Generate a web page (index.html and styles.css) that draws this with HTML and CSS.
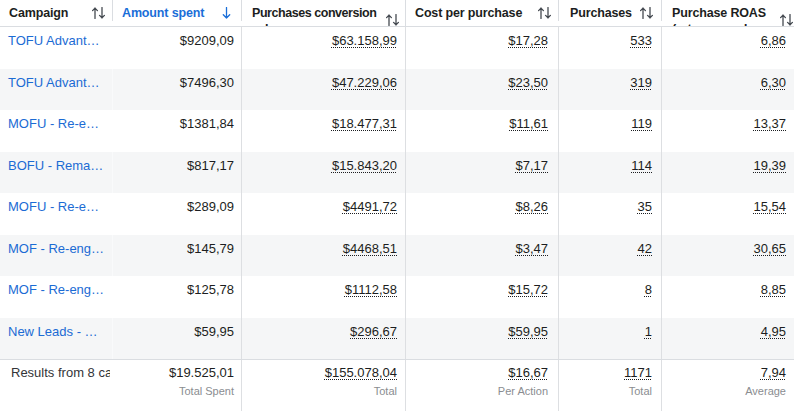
FILE: index.html
```html
<!DOCTYPE html>
<html>
<head>
<meta charset="utf-8">
<link rel="stylesheet" href="styles.css">
</head>
<body>
<div class="table">
  <div class="row head">
    <div class="hc c1"><span class="ht">Campaign</span><svg class="sort" viewBox="0 0 13 12"><path d="M3 11.5V1M0.6 3.6L3 1.1L5.4 3.6M10 0.5V11M7.6 8.4L10 10.9L12.4 8.4"/></svg></div>
    <div class="hc active"><span class="ht">Amount spent</span><svg class="sortdown" viewBox="0 0 9 12"><path d="M4.5 0.5V11M1.3 7.8L4.5 11L7.7 7.8"/></svg></div>
    <div class="hc pc two"><span class="ht">Purchases conversion<br>value</span><svg class="sort" viewBox="0 0 13 12"><path d="M3 11.5V1M0.6 3.6L3 1.1L5.4 3.6M10 0.5V11M7.6 8.4L10 10.9L12.4 8.4"/></svg></div>
    <div class="hc cp"><span class="ht">Cost per purchase</span><svg class="sort" viewBox="0 0 13 12"><path d="M3 11.5V1M0.6 3.6L3 1.1L5.4 3.6M10 0.5V11M7.6 8.4L10 10.9L12.4 8.4"/></svg></div>
    <div class="hc pu"><span class="ht">Purchases</span><svg class="sort" viewBox="0 0 13 12"><path d="M3 11.5V1M0.6 3.6L3 1.1L5.4 3.6M10 0.5V11M7.6 8.4L10 10.9L12.4 8.4"/></svg></div>
    <div class="hc ro two"><span class="ht">Purchase ROAS<br>(return on ad spend)</span><svg class="sort" viewBox="0 0 13 12"><path d="M3 11.5V1M0.6 3.6L3 1.1L5.4 3.6M10 0.5V11M7.6 8.4L10 10.9L12.4 8.4"/></svg></div>
  </div>

  <div class="row body">
    <div class="c c1 link">TOFU Advantage+ Shopping</div>
    <div class="c n amt">$9209,09</div>
    <div class="c n pcv"><span class="u">$63.158,99</span></div>
    <div class="c n cpp"><span class="u">$17,28</span></div>
    <div class="c n pur"><span class="u">533</span></div>
    <div class="c n roas"><span class="u">6,86</span></div>
  </div>
  <div class="row body alt">
    <div class="c c1 link">TOFU Advantage+ Broad</div>
    <div class="c n amt">$7496,30</div>
    <div class="c n pcv"><span class="u">$47.229,06</span></div>
    <div class="c n cpp"><span class="u">$23,50</span></div>
    <div class="c n pur"><span class="u">319</span></div>
    <div class="c n roas"><span class="u">6,30</span></div>
  </div>
  <div class="row body">
    <div class="c c1 link">MOFU - Re-engagement</div>
    <div class="c n amt">$1381,84</div>
    <div class="c n pcv"><span class="u">$18.477,31</span></div>
    <div class="c n cpp"><span class="u">$11,61</span></div>
    <div class="c n pur"><span class="u">119</span></div>
    <div class="c n roas"><span class="u">13,37</span></div>
  </div>
  <div class="row body alt">
    <div class="c c1 link">BOFU - Remarketing</div>
    <div class="c n amt">$817,17</div>
    <div class="c n pcv"><span class="u">$15.843,20</span></div>
    <div class="c n cpp"><span class="u">$7,17</span></div>
    <div class="c n pur"><span class="u">114</span></div>
    <div class="c n roas"><span class="u">19,39</span></div>
  </div>
  <div class="row body">
    <div class="c c1 link">MOFU - Re-engagement 2</div>
    <div class="c n amt">$289,09</div>
    <div class="c n pcv"><span class="u">$4491,72</span></div>
    <div class="c n cpp"><span class="u">$8,26</span></div>
    <div class="c n pur"><span class="u">35</span></div>
    <div class="c n roas"><span class="u">15,54</span></div>
  </div>
  <div class="row body alt">
    <div class="c c1 link">MOF - Re-engagement</div>
    <div class="c n amt">$145,79</div>
    <div class="c n pcv"><span class="u">$4468,51</span></div>
    <div class="c n cpp"><span class="u">$3,47</span></div>
    <div class="c n pur"><span class="u">42</span></div>
    <div class="c n roas"><span class="u">30,65</span></div>
  </div>
  <div class="row body">
    <div class="c c1 link">MOF - Re-engagement 2</div>
    <div class="c n amt">$125,78</div>
    <div class="c n pcv"><span class="u">$1112,58</span></div>
    <div class="c n cpp"><span class="u">$15,72</span></div>
    <div class="c n pur"><span class="u">8</span></div>
    <div class="c n roas"><span class="u">8,85</span></div>
  </div>
  <div class="row body alt">
    <div class="c c1 link">New Leads - Summer</div>
    <div class="c n amt">$59,95</div>
    <div class="c n pcv"><span class="u">$296,67</span></div>
    <div class="c n cpp"><span class="u">$59,95</span></div>
    <div class="c n pur"><span class="u">1</span></div>
    <div class="c n roas"><span class="u">4,95</span></div>
  </div>

  <div class="row foot">
    <div class="f c1 res"><span class="clip">Results from 8 campaigns</span></div>
    <div class="f n amt"><div>$19.525,01</div><div class="sub">Total Spent</div></div>
    <div class="f n pcv"><div><span class="u">$155.078,04</span></div><div class="sub">Total</div></div>
    <div class="f n cpp"><div><span class="u">$16,67</span></div><div class="sub">Per Action</div></div>
    <div class="f n pur"><div><span class="u">1171</span></div><div class="sub">Total</div></div>
    <div class="f n roas"><div><span class="u">7,94</span></div><div class="sub">Average</div></div>
  </div>
</div>
</body>
</html>
```

FILE: styles.css
```css
html, body {
  margin: 0;
  padding: 0;
  background: #ffffff;
}
body {
  font-family: "Liberation Sans", Arial, sans-serif;
  font-size: 13px;
  color: #1c1e21;
  width: 794px;
  height: 411px;
  overflow: hidden;
}
.table {
  width: 794px;
}
.row {
  display: grid;
  grid-template-columns: 113px 129px 164px 153px 103px 132px;
}
.head {
  height: 26px;
  border-bottom: 1px solid #dadde1;
  overflow: hidden;
}
.hc {
  display: flex;
  align-items: center;
  justify-content: space-between;
  gap: 3px;
  padding: 5px 8px 0 9px;
  border-right: 1px solid #dadde1;
  font-weight: bold;
  font-size: 12.5px;
  letter-spacing: -0.15px;
  line-height: 16px;
  white-space: nowrap;
  overflow: hidden;
  align-self: start;
}
.hc.c1 { padding-right: 7px; }
.hc.active { color: #1a6ed8; padding-left: 9px; padding-right: 9px; }
.hc.pc { padding-left: 10px; padding-right: 6px; }
.hc.pc .ht { letter-spacing: -0.45px; }
.hc.cp { padding-left: 9px; padding-right: 7px; }
.hc.pu { padding-left: 11px; padding-right: 8px; }
.hc.ro { padding-left: 10px; padding-right: 1px; border-right: none; }
.ht {
  overflow: visible;
}
.two .ht {
  flex: 1 1 auto;
  min-width: 0;
  overflow: hidden;
}
.sort, .sortdown {
  flex: none;
  fill: none;
  stroke-width: 1.3;
  stroke-linecap: round;
  stroke-linejoin: round;
}
.sort {
  width: 13px;
  height: 12px;
  stroke: #444950;
}
.sortdown {
  width: 9px;
  height: 12px;
  stroke: #1a6ed8;
  margin-right: 1px;
}
.two .sort {
  align-self: flex-start;
  margin-top: 9px;
  margin-left: 4px;
}
.body {
  height: 41.5px;
  background: #ffffff;
}
.body.alt {
  background: #f5f6f7;
}
.c {
  padding-top: 6px;
  line-height: 16px;
  border-right: 1px solid #dddfe2;
  white-space: nowrap;
  overflow: hidden;
}
.c.c1 {
  border-right: 1px solid rgba(255, 255, 255, 0.45);
}
.link {
  color: #1b6bd4;
  padding-left: 8px;
  padding-right: 6px;
  text-overflow: ellipsis;
}
.n { text-align: right; }
.amt { padding-right: 7px; }
.pcv { padding-right: 8px; }
.cpp { padding-right: 10px; }
.pur { padding-right: 9px; }
.roas { padding-right: 8px; border-right: none !important; }
.u {
  text-decoration: underline dotted #1c1e21;
  text-decoration-thickness: 1px;
  text-underline-offset: 2px;
}
.foot {
  border-top: 1px solid #dadde1;
  height: 52px;
}
.f {
  padding-top: 5px;
  line-height: 16px;
  border-right: 1px solid #dddfe2;
  white-space: nowrap;
  overflow: hidden;
}
.f.c1 {
  border-right: none;
}
.res {
  padding-left: 11px;
  padding-right: 3px;
  color: #333538;
}
.clip {
  display: block;
  overflow: hidden;
}
.sub {
  font-size: 11px;
  line-height: 20px;
  color: #8a8d91;
}
```
